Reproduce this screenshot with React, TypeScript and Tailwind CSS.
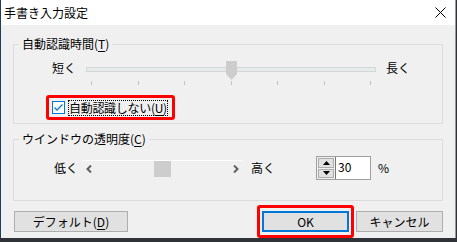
import React from 'react';

const Ul = ({ c }: { c: string }) => <span className="underline underline-offset-[2px]">{c}</span>;

const TrackSlider = () => {
  const ticks = [0, 1, 2, 3, 4, 5, 6];
  return (
    <div className="relative w-[290px] h-[24px] flex flex-col">
      <div className="mt-[6px] h-[5px] bg-[#e7eaea] border border-[#d6d6d6]" />
      <div className="mt-[9px] h-[4px] flex justify-between px-[5px]">
        {ticks.map((t) => (
          <div key={t} className="w-px h-[4px] bg-[#c4c4c4]" />
        ))}
      </div>
      <svg className="absolute left-[140px] top-0" width="11" height="19" viewBox="0 0 11 19">
        <path d="M0 0H11V13L5.5 19L0 13Z" fill="#cdcdcd" />
      </svg>
    </div>
  );
};

const ScrollSlider = () => (
  <div className="relative w-[161px] h-[17px] border-t border-white flex items-center justify-between px-[4px]">
    <svg width="6" height="8" viewBox="0 0 6 8">
      <path d="M5 0.5L1.5 4L5 7.5" stroke="#606060" strokeWidth="2" fill="none" />
    </svg>
    <svg width="6" height="8" viewBox="0 0 6 8">
      <path d="M1 0.5L4.5 4L1 7.5" stroke="#606060" strokeWidth="2" fill="none" />
    </svg>
    <div className="absolute left-[72px] top-0 w-[17px] h-[16px] bg-[#cdcdcd]" />
  </div>
);

const Spinner = () => (
  <div className="flex h-[24px] border border-[#a0a0a0]">
    <div className="w-[18px] flex flex-col bg-[#f0f0f0] p-px gap-px">
      <div className="flex-1 flex items-center justify-center bg-[#e1e1e1] border border-[#adadad]">
        <svg width="7" height="4" viewBox="0 0 7 4"><path d="M0 4L3.5 0L7 4Z" fill="#000" /></svg>
      </div>
      <div className="flex-1 flex items-center justify-center bg-[#e1e1e1] border border-[#adadad]">
        <svg width="7" height="4" viewBox="0 0 7 4"><path d="M0 0L3.5 4L7 0Z" fill="#000" /></svg>
      </div>
    </div>
    <div className="w-[35px] bg-white border-l border-[#7a7a7a] pl-[2px] leading-[20px]">30</div>
  </div>
);

export default function App() {
  return (
    <div className="w-[457px] h-[242px] bg-[#2f3338] overflow-hidden font-['Noto_Sans_CJK_JP',sans-serif] text-[12px] leading-[16px] text-black">
      <div className="w-[456px] h-[238px] bg-[#f0f0f0] border-l border-l-[#1f3d5c] border-r border-r-[#9a9a9a] flex flex-col">
        <div className="h-[25px] bg-white flex items-center justify-between pl-[3px] pr-[9px]">
          <span>手書き入力設定</span>
          <svg width="11" height="11" viewBox="0 0 11 11">
            <path d="M0.5 0.5L10.5 10.5M10.5 0.5L0.5 10.5" stroke="#000" strokeWidth="1" />
          </svg>
        </div>
        <div className="flex flex-col px-[12px] pt-[11px]">
          <fieldset className="h-[88px] border border-[#dcdcdc] flex flex-col">
            <legend className="ml-[5px] px-[3px]">
              自動認識時間(<Ul c="T" />)
            </legend>
            <div className="mt-[9px] flex items-start pl-[38px]">
              <span className="w-[34px] -mt-px">短く</span>
              <TrackSlider />
              <span className="ml-[10px] -mt-px">長く</span>
            </div>
            <div className="mt-[10px] ml-[32px] w-[129px] h-[25px] border-[3px] border-[#ff0000] rounded-[3px] flex items-center pl-[3px] whitespace-nowrap">
              <div className="shrink-0 w-[13px] h-[13px] bg-white border border-[#0078d7] flex items-center justify-center">
                <svg width="11" height="11" viewBox="0 0 11 11">
                  <path d="M1.5 5.5L4 8L9.5 2.5" stroke="#0078d7" strokeWidth="1.3" fill="none" />
                </svg>
              </div>
              <span className="ml-[3px] border border-dotted border-black leading-[14px] tracking-[-0.3px] whitespace-nowrap">
                自動認識しない(<Ul c="U" />)
              </span>
            </div>
          </fieldset>
          <fieldset className="mt-[7px] h-[70px] border border-[#dcdcdc] flex flex-col">
            <legend className="ml-[5px] px-[3px]">
              ウインドウの透明度(<Ul c="C" />)
            </legend>
            <div className="mt-[9px] flex items-center pl-[40px]">
              <span className="w-[28px]">低く</span>
              <ScrollSlider />
              <span className="ml-[8px]">高く</span>
              <div className="ml-[41px]">
                <Spinner />
              </div>
              <span className="ml-[7px]">%</span>
            </div>
          </fieldset>
          <div className="mt-[10px] flex justify-between pl-px">
            <button className="w-[114px] h-[21px] bg-[#e1e1e1] border border-[#adadad] leading-[19px]">
              デフォルト(<Ul c="D" />)
            </button>
            <div className="flex gap-[7px]">
              <div className="-mx-[5px] -my-[6px] border-[3px] border-[#ff0000] rounded-[3px] px-[2px] py-[3px]">
                <button className="w-[87px] h-[21px] bg-[#e1e1e1] border-2 border-[#0078d7] leading-[17px]">OK</button>
              </div>
              <button className="w-[87px] h-[21px] bg-[#e1e1e1] border border-[#adadad] leading-[19px]">キャンセル</button>
            </div>
          </div>
        </div>
      </div>
    </div>
  );
}
